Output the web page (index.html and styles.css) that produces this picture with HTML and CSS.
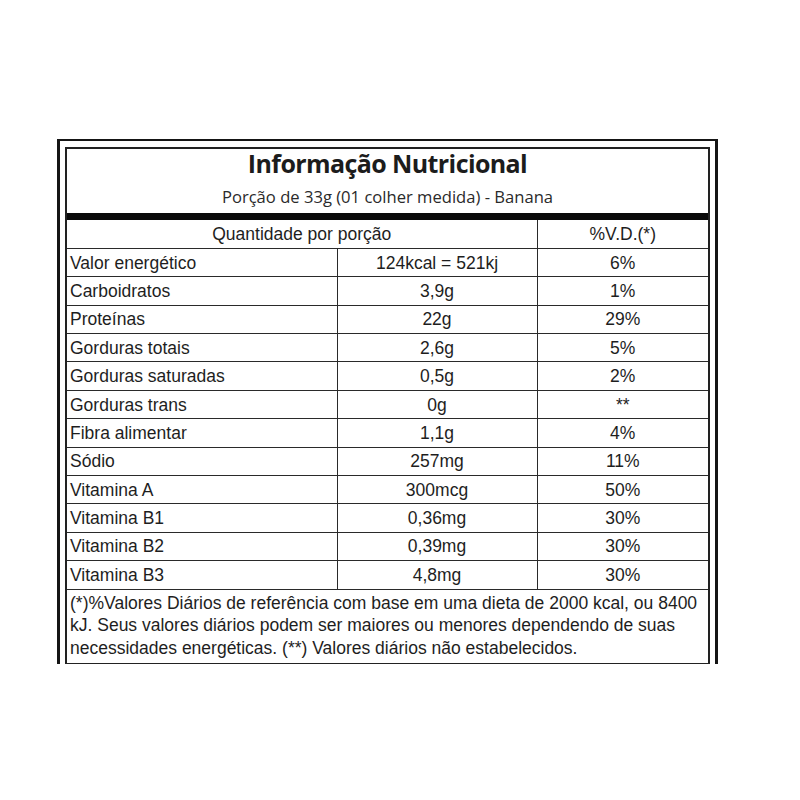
FILE: index.html
```html
<!DOCTYPE html>
<html lang="pt">
<head>
<meta charset="utf-8">
<title>Informação Nutricional</title>
<link rel="stylesheet" href="styles.css">
</head>
<body>
<div class="frame">
  <div class="label">
    <div class="head">
      <h1 class="title">Informação Nutricional</h1>
      <p class="serving">Porção de 33g (01 colher medida) - Banana</p>
    </div>
    <div class="bar"></div>
    <table class="facts">
      <colgroup>
        <col class="c1"><col class="c2"><col class="c3">
      </colgroup>
      <tr class="hdr"><td colspan="2" class="mid">Quantidade por porção</td><td class="mid">%V.D.(*)</td></tr>
      <tr><td>Valor energético</td><td class="mid">124kcal = 521kj</td><td class="mid">6%</td></tr>
      <tr><td>Carboidratos</td><td class="mid">3,9g</td><td class="mid">1%</td></tr>
      <tr><td>Proteínas</td><td class="mid">22g</td><td class="mid">29%</td></tr>
      <tr><td>Gorduras totais</td><td class="mid">2,6g</td><td class="mid">5%</td></tr>
      <tr><td>Gorduras saturadas</td><td class="mid">0,5g</td><td class="mid">2%</td></tr>
      <tr><td>Gorduras trans</td><td class="mid">0g</td><td class="mid">**</td></tr>
      <tr><td>Fibra alimentar</td><td class="mid">1,1g</td><td class="mid">4%</td></tr>
      <tr><td>Sódio</td><td class="mid">257mg</td><td class="mid">11%</td></tr>
      <tr><td>Vitamina A</td><td class="mid">300mcg</td><td class="mid">50%</td></tr>
      <tr><td>Vitamina B1</td><td class="mid">0,36mg</td><td class="mid">30%</td></tr>
      <tr><td>Vitamina B2</td><td class="mid">0,39mg</td><td class="mid">30%</td></tr>
      <tr><td>Vitamina B3</td><td class="mid">4,8mg</td><td class="mid">30%</td></tr>
      <tr class="foot"><td colspan="3">(*)%Valores Diários de referência com base em uma dieta de 2000 kcal, ou 8400 kJ. Seus valores diários podem ser maiores ou menores dependendo de suas necessidades energéticas. (**) Valores diários não estabelecidos.</td></tr>
    </table>
  </div>
</div>
</body>
</html>
```
FILE: styles.css
```css
html, body {
  margin: 0;
  padding: 0;
  background: #ffffff;
}

.frame {
  margin: 139px 0 0 57px;
  width: 645px;
  border-top: 2px solid #151515;
  border-left: 3px solid #151515;
  border-right: 3px solid #151515;
  padding: 6px 5px 0 5px;
}

.label {
  border: 2px solid #222;
  border-bottom-width: 1px;
  color: #1c1c1c;
}

.head {
  height: 64px;
  text-align: center;
  font-family: "Open Sans", "Liberation Sans", sans-serif;
}

.title {
  margin: 0;
  padding-top: 0;
  font-size: 25px;
  font-weight: 700;
  line-height: 28px;
  letter-spacing: -0.6px;
}

.serving {
  margin: 9px 0 0 0;
  font-size: 16.6px;
  line-height: 22px;
  color: #2a2a2a;
}

.bar {
  height: 7px;
  background: #0a0a0a;
}

.facts {
  width: 100%;
  border-collapse: collapse;
  table-layout: fixed;
  font-family: "Liberation Sans", Arial, sans-serif;
  font-size: 17.5px;
  color: #1e1e1e;
}

.c1 { width: 270px; }
.c2 { width: 200px; }
.c3 { width: auto; }

.facts td {
  height: 28.4px;
  padding: 0 0 0 3px;
  border: 1px solid #2a2a2a;
  line-height: 20px;
  box-sizing: border-box;
  vertical-align: middle;
  white-space: nowrap;
}

.facts tr:first-child td { border-top: 0; }
.facts td:first-child { border-left: 0; }
.facts td:last-child { border-right: 0; }

.facts td.mid {
  text-align: center;
  padding: 0;
}

.facts tr.foot td {
  height: auto;
  padding: 2px 4px 4px 3px;
  line-height: 22.5px;
  border-bottom: 0;
  vertical-align: top;
  white-space: normal;
}
```
